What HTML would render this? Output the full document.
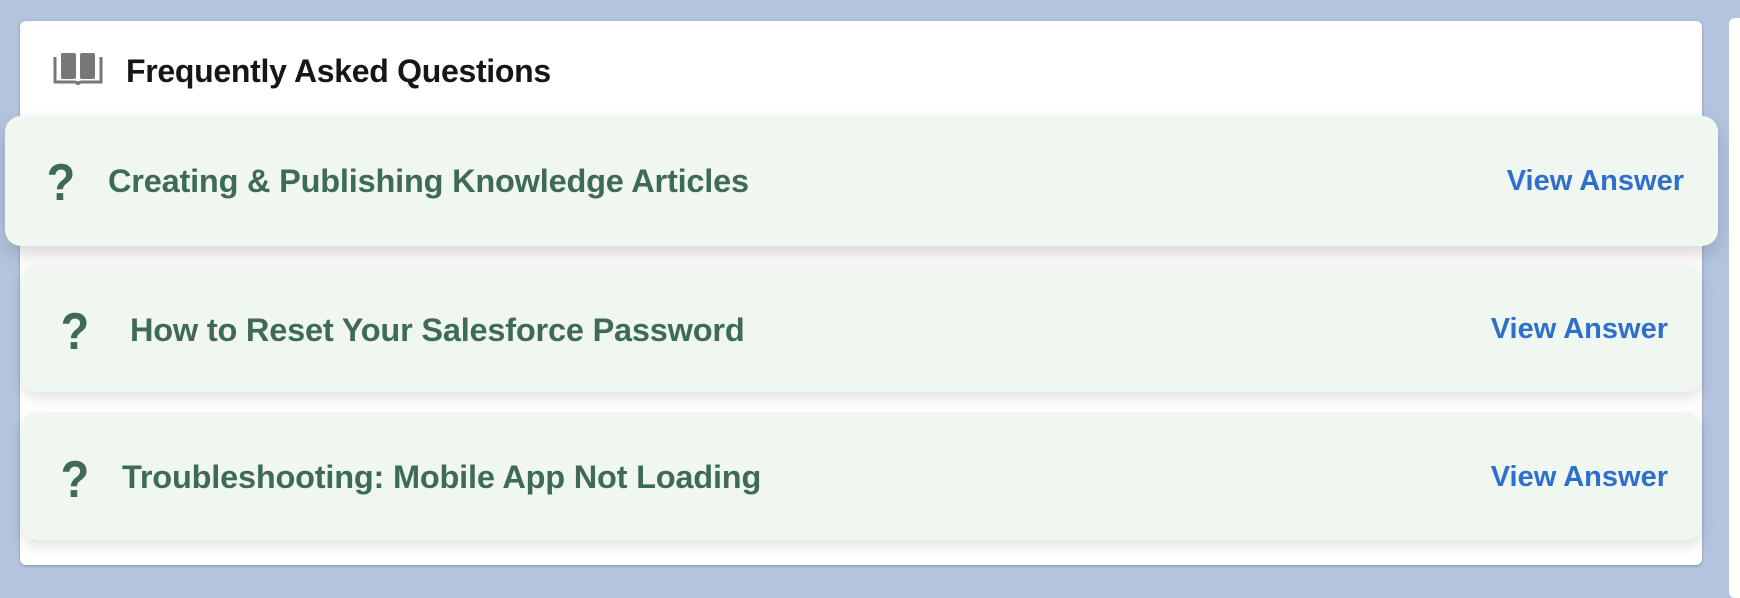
<!DOCTYPE html>
<html><head><meta charset="utf-8"><style>
*{box-sizing:border-box;margin:0;padding:0}
body{width:1740px;height:588px;background:#b4c4de;font-family:"Liberation Sans",Arial,sans-serif;position:relative;overflow:hidden}
.card{position:absolute;left:20px;top:21px;width:1682px;height:544px;background:#fff;border-radius:6px;box-shadow:0 1px 3px rgba(0,0,0,.25)}
.right{position:absolute;left:1729px;top:18px;width:20px;height:580px;background:#fff;border-radius:6px}
.hdr{position:absolute;left:126px;top:53px;font-size:32px;font-weight:bold;color:#161616;letter-spacing:-0.3px}
.row{position:absolute;background:#f0f7f0;border-radius:16px;box-shadow:0 6px 14px rgba(0,0,0,.12)}
.q{position:absolute;font-size:52px;font-weight:bold;color:#3e6b52;line-height:1;transform:scaleX(0.9)}
.t{position:absolute;font-size:32.5px;font-weight:bold;color:#3e6b52;line-height:1;letter-spacing:-0.2px}
.v{position:absolute;font-size:29px;font-weight:bold;color:#2f6fcc;line-height:1;text-align:right;width:300px}
</style></head><body>
<div class="card"></div>
<div class="right"></div>
<svg style="position:absolute;left:53px;top:51px" width="50" height="36" viewBox="0 0 50 36">
<path d="M2 6 V31 H21 Q25 31 25 34 Q25 31 29 31 H48 V6" fill="none" stroke="#777" stroke-width="3"/>
<rect x="8" y="2" width="15" height="26" rx="2" fill="#777"/>
<rect x="27" y="2" width="15" height="26" rx="2" fill="#777"/>
</svg>
<div class="hdr">Frequently Asked Questions</div>

<div class="row" style="left:22px;top:265px;width:1680px;height:127px"></div>
<div class="row" style="left:22px;top:412px;width:1680px;height:128px"></div>
<div class="row" style="left:5px;top:116px;width:1713px;height:130px;box-shadow:0 8px 18px rgba(0,0,0,.16)"></div>

<div class="q" style="left:45px;top:157px">?</div>
<div class="t" style="left:108px;top:165px">Creating &amp; Publishing Knowledge Articles</div>
<div class="v" style="left:1384px;top:167px">View Answer</div>

<div class="q" style="left:59px;top:306px">?</div>
<div class="t" style="left:130px;top:314px">How to Reset Your Salesforce Password</div>
<div class="v" style="left:1368px;top:315px">View Answer</div>

<div class="q" style="left:59px;top:454px">?</div>
<div class="t" style="left:122px;top:461px">Troubleshooting: Mobile App Not Loading</div>
<div class="v" style="left:1368px;top:463px">View Answer</div>
</body></html>
